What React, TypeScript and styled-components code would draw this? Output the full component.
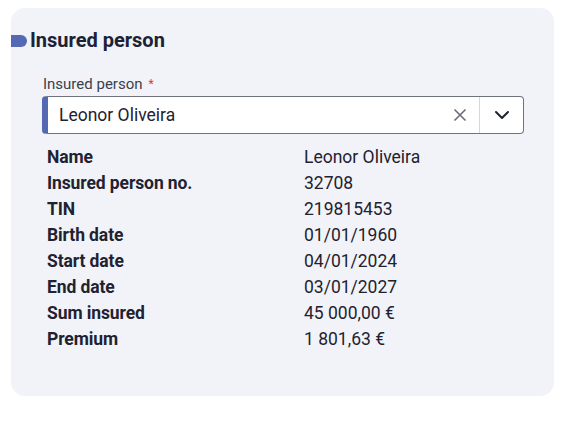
import React from "react";
import styled, { createGlobalStyle } from "styled-components";

const GlobalStyle = createGlobalStyle`
  html, body {
    margin: 0;
    padding: 0;
    background: #ffffff;
    font-family: Roboto, "Liberation Sans", Arial, sans-serif;
  }
`;

const Page = styled.div`
  width: 565px;
  height: 431px;
  padding: 8px 11px 0 11px;
  box-sizing: border-box;
`;

const Card = styled.section`
  width: 543px;
  height: 388px;
  background: #f2f3f8;
  border-radius: 14px;
  box-sizing: border-box;
  padding-top: 19px;
`;

const Heading = styled.h2`
  display: flex;
  align-items: center;
  gap: 3px;
  margin: 0;
  height: 26px;
  font-size: 20px;
  font-weight: 700;
  color: #1c2236;
`;

const Marker = styled.span`
  display: block;
  width: 16px;
  height: 12px;
  margin-top: 1px;
  background: #5468b4;
  border-radius: 0 7px 7px 0;
`;

const Field = styled.div`
  margin: 22px 0 0 31px;
  width: 482px;
`;

const Label = styled.label`
  display: block;
  font-size: 15px;
  color: #3a3f4b;
  line-height: 18px;
  margin-bottom: 3px;
  padding-left: 1px;
`;

const Required = styled.span`
  color: #e0334b;
  font-size: 12px;
  margin-left: 6px;
  vertical-align: top;
`;

const Select = styled.div`
  display: flex;
  align-items: stretch;
  height: 38px;
  box-sizing: border-box;
  background: #ffffff;
  border: 1px solid #6f7380;
  border-left: 6px solid #5468b4;
  border-radius: 4px;
`;

const Value = styled.div`
  flex: 1;
  display: flex;
  align-items: center;
  padding-left: 11px;
  font-size: 17.5px;
  color: #1f2230;
`;

const IconButton = styled.div<{ $divider?: boolean }>`
  display: flex;
  align-items: center;
  justify-content: center;
  width: ${(p) => (p.$divider ? "43px" : "38px")};
  border-left: ${(p) => (p.$divider ? "1px solid #d6d8de" : "none")};
`;

const Details = styled.dl`
  display: grid;
  grid-template-columns: 257px 1fr;
  margin: 10px 0 0 36px;
  font-size: 17.5px;
  line-height: 26px;
  color: #1f2230;
`;

const Term = styled.dt`
  font-weight: 700;
  letter-spacing: -0.1px;
`;

const Desc = styled.dd`
  margin: 0;
`;

const rows: [string, string][] = [
  ["Name", "Leonor Oliveira"],
  ["Insured person no.", "32708"],
  ["TIN", "219815453"],
  ["Birth date", "01/01/1960"],
  ["Start date", "04/01/2024"],
  ["End date", "03/01/2027"],
  ["Sum insured", "45 000,00 €"],
  ["Premium", "1 801,63 €"],
];

export default function App() {
  return (
    <>
      <GlobalStyle />
      <Page>
        <Card>
          <Heading>
            <Marker />
            Insured person
          </Heading>
          <Field>
            <Label>
              Insured person<Required>*</Required>
            </Label>
            <Select>
              <Value>Leonor Oliveira</Value>
              <IconButton>
                <svg width="14" height="14" viewBox="0 0 14 14">
                  <path d="M1.5 1.5 L12.5 12.5 M12.5 1.5 L1.5 12.5" stroke="#6b6e78" strokeWidth="1.6" fill="none" />
                </svg>
              </IconButton>
              <IconButton $divider>
                <svg width="16" height="10" viewBox="0 0 16 10">
                  <path d="M2 2 L8 8 L14 2" stroke="#1f2230" strokeWidth="2" fill="none" strokeLinecap="round" strokeLinejoin="round" />
                </svg>
              </IconButton>
            </Select>
          </Field>
          <Details>
            {rows.map(([k, v]) => (
              <React.Fragment key={k}>
                <Term>{k}</Term>
                <Desc>{v}</Desc>
              </React.Fragment>
            ))}
          </Details>
        </Card>
      </Page>
    </>
  );
}
